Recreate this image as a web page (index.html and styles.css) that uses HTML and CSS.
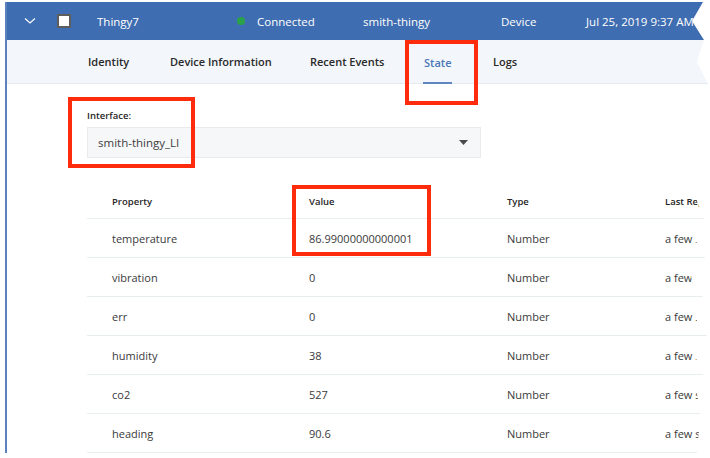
FILE: index.html
```html
<!DOCTYPE html>
<html>
<head>
<meta charset="utf-8">
<link rel="stylesheet" href="styles.css">
</head>
<body>
<div class="page">
  <div class="card">
    <div class="header">
      <div class="cell chev">
        <svg width="12" height="8" viewBox="0 0 12 8"><path d="M1 1.5 L6 6 L11 1.5" fill="none" stroke="#fff" stroke-width="1.2"/></svg>
      </div>
      <div class="cell"><span class="checkbox"></span></div>
      <div class="cell">Thingy7</div>
      <div class="cell status"><span class="dot"></span>Connected</div>
      <div class="cell">smith-thingy</div>
      <div class="cell">Device</div>
      <div class="cell">Jul 25, 2019 9:37 AM</div>
    </div>
    <div class="tabs">
      <div class="tab">Identity</div>
      <div class="tab">Device Information</div>
      <div class="tab">Recent Events</div>
      <div class="tab active"><span>State</span></div>
      <div class="tab">Logs</div>
    </div>
    <div class="content">
      <div class="field">
        <div class="label">Interface:</div>
        <div class="select">
          <span>smith-thingy_LI</span>
          <svg width="9" height="5" viewBox="0 0 9 5"><path d="M0 0 H9 L4.5 5 Z" fill="#4a4a4a"/></svg>
        </div>
      </div>
      <div class="table">
        <div class="row head">
          <div>Property</div><div>Value</div><div>Type</div><div>Last Reported</div>
        </div>
        <div class="row"><div>temperature</div><div>86.99000000000001</div><div>Number</div><div>a few seconds ago</div></div>
        <div class="row"><div>vibration</div><div>0</div><div>Number</div><div>a few seconds ago</div></div>
        <div class="row"><div>err</div><div>0</div><div>Number</div><div>a few seconds ago</div></div>
        <div class="row"><div>humidity</div><div>38</div><div>Number</div><div>a few seconds ago</div></div>
        <div class="row"><div>co2</div><div>527</div><div>Number</div><div>a few seconds ago</div></div>
        <div class="row"><div>heading</div><div>90.6</div><div>Number</div><div>a few seconds ago</div></div>
      </div>
    </div>
  </div>
  <div class="mark mark-state"></div>
  <div class="mark mark-iface"></div>
  <div class="mark mark-value"></div>
</div>
</body>
</html>
```
FILE: styles.css
```css
html, body {
  margin: 0;
  padding: 0;
  background: #fff;
}
body {
  font-family: "Open Sans", "Noto Sans", sans-serif;
  color: #3b3b3b;
}
.page {
  position: relative;
  width: 710px;
  height: 458px;
  overflow: hidden;
}
.card {
  margin: 2px 0 0 5px;
  height: 451px;
  border-left: 2px solid #5a80bd;
  overflow: hidden;
  clip-path: polygon(0 0, 698px 0, 687px 19px, 699px 38px, 692px 60px, 703px 82px, 697px 150px, 692px 199px, 699px 216px, 689px 236px, 700px 255px, 686px 275px, 698px 294px, 688px 313px, 702px 333px, 689px 352px, 698px 372px, 692px 391px, 695px 411px, 694px 429px, 692px 451px, 0 451px);
}
.header {
  height: 38px;
  background: #3f6db1;
  color: #fff;
  font-size: 11.5px;
  display: grid;
  grid-template-columns: 50px 40px 140px 126px 138px 85px auto;
  align-items: center;
  white-space: nowrap;
}
.chev {
  padding-left: 17px;
  display: flex;
  align-items: center;
}
.checkbox {
  display: block;
  width: 10px;
  height: 10px;
  background: #fff;
  border: 2px solid #5d5d5d;
}
.status {
  display: flex;
  align-items: center;
}
.dot {
  width: 8px;
  height: 8px;
  border-radius: 50%;
  background: #2aa24a;
  margin-right: 12px;
}
.tabs {
  height: 44px;
  background: #f3f6fa;
  border-bottom: 1px solid #e6eaef;
  box-sizing: border-box;
  display: grid;
  grid-template-columns: 82px 140px 114px 69px auto;
  padding-left: 81px;
  font-size: 11px;
  font-weight: 600;
  color: #2a2a2a;
  align-items: stretch;
}
.tab {
  display: flex;
  align-items: center;
  white-space: nowrap;
}
.tab.active span {
  color: #4b78b8;
  height: 100%;
  display: flex;
  align-items: center;
  padding: 0 1px;
  margin-left: -1px;
  box-sizing: border-box;
  border-bottom: 2px solid #5e86c1;
  padding-top: 2px;
  margin-bottom: -1px;
}
.content {
  padding-left: 80px;
}
.field {
  padding-top: 25px;
}
.label {
  font-size: 9.5px;
  font-weight: 600;
  color: #262626;
  height: 18px;
  line-height: 14px;
}
.select {
  width: 394px;
  height: 31px;
  box-sizing: border-box;
  background: #f5f7f9;
  border: 1px solid #e7ebee;
  display: flex;
  align-items: center;
  justify-content: space-between;
  padding: 0 12px 0 10px;
  font-size: 11.5px;
  color: #3e3e3e;
}
.table {
  margin-top: 27px;
  width: 640px;
}
.row {
  display: grid;
  grid-template-columns: 197px 198px 158px auto;
  height: 39px;
  align-items: center;
  border-bottom: 1px solid #e8edf0;
  box-sizing: border-box;
  font-size: 11px;
  color: #3a3a3a;
  white-space: nowrap;
}
.row > div {
  padding-left: 25px;
}
.row.head {
  height: 34px;
  font-size: 9.5px;
  font-weight: 600;
  color: #262626;
}
.mark {
  position: absolute;
  border: 4px solid #fe2b0c;
  box-sizing: border-box;
}
.mark-state {
  left: 405px;
  top: 40px;
  width: 73px;
  height: 65px;
}
.mark-iface {
  left: 68px;
  top: 97px;
  width: 127px;
  height: 71px;
}
.mark-value {
  left: 292px;
  top: 185px;
  width: 139px;
  height: 71px;
}
```
